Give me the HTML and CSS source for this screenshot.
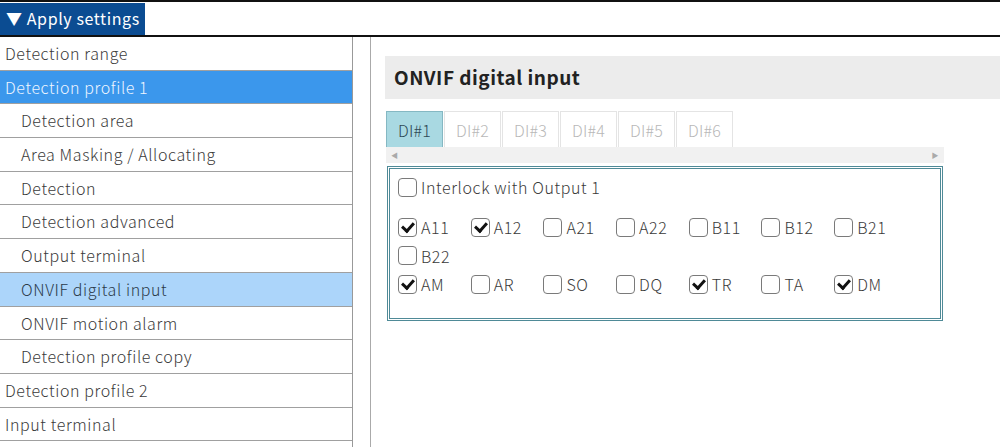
FILE: index.html
```html
<!DOCTYPE html>
<html lang="en">
<head>
    <meta charset="UTF-8">
    <title>ONVIF digital input</title>
    <link rel="stylesheet" href="styles.css">
</head>
<body>
    <div class="topbar">
        <div class="apply">&#9660; Apply settings</div>
    </div>

    <div class="layout">
        <ul class="menu">
            <li>Detection range</li>
            <li class="active">Detection profile 1</li>
            <li class="sub">Detection area</li>
            <li class="sub">Area Masking / Allocating</li>
            <li class="sub">Detection</li>
            <li class="sub">Detection advanced</li>
            <li class="sub">Output terminal</li>
            <li class="sub current">ONVIF digital input</li>
            <li class="sub">ONVIF motion alarm</li>
            <li class="sub">Detection profile copy</li>
            <li>Detection profile 2</li>
            <li>Input terminal</li>
        </ul>

        <div class="content">
            <div class="heading">ONVIF digital input</div>

            <div class="tabs">
                <div class="tab selected">DI#1</div>
                <div class="tab">DI#2</div>
                <div class="tab">DI#3</div>
                <div class="tab">DI#4</div>
                <div class="tab">DI#5</div>
                <div class="tab">DI#6</div>
            </div>
            <div class="scrollbar">
                <span class="arrow">&#9664;</span>
                <span class="arrow">&#9654;</span>
            </div>

            <div class="panel">
                <label class="interlock"><span class="box"></span>Interlock with Output 1</label>

                <div class="options">
                    <label class="opt"><span class="box on"></span>A11</label>
                    <label class="opt"><span class="box on"></span>A12</label>
                    <label class="opt"><span class="box"></span>A21</label>
                    <label class="opt"><span class="box"></span>A22</label>
                    <label class="opt"><span class="box"></span>B11</label>
                    <label class="opt"><span class="box"></span>B12</label>
                    <label class="opt"><span class="box"></span>B21</label>
                    <label class="opt"><span class="box"></span>B22</label>
                </div>
                <div class="options">
                    <label class="opt"><span class="box on"></span>AM</label>
                    <label class="opt"><span class="box"></span>AR</label>
                    <label class="opt"><span class="box"></span>SO</label>
                    <label class="opt"><span class="box"></span>DQ</label>
                    <label class="opt"><span class="box on"></span>TR</label>
                    <label class="opt"><span class="box"></span>TA</label>
                    <label class="opt"><span class="box on"></span>DM</label>
                </div>
            </div>
        </div>
    </div>
</body>
</html>
```

FILE: styles.css
```css
body {
    margin: 0;
    font-family: "Noto Sans CJK JP", "Noto Sans", sans-serif;
    font-size: 16px;
    font-weight: 300;
    letter-spacing: 0.6px;
    color: #3a3a3a;
    background-color: #fff;
    overflow: hidden;
    height: 447px;
}

.topbar {
    border-top: 2px solid #111;
    border-bottom: 2px solid #111;
    height: 32px;
    padding-top: 1px;
}

.apply {
    display: inline-block;
    background-color: #0b4c92;
    color: #fff;
    height: 32px;
    line-height: 31px;
    padding: 0 5px 0 6px;
    font-weight: 400;
}

.layout {
    display: flex;
    gap: 17px;
    height: 411px;
}

.menu {
    list-style: none;
    margin: 0;
    padding: 0;
    width: 352px;
    border-right: 1px solid #999;
}

.menu li {
    height: 32.7px;
    line-height: 32px;
    border-bottom: 1px solid #a0a0a0;
    padding-left: 5px;
    white-space: nowrap;
}

.menu li.sub {
    padding-left: 21px;
}

.menu li.active {
    background-color: #3b97ec;
    color: #eef5ff;
}

.menu li.current {
    background-color: #acd5fa;
    color: #2b3a4a;
}

.content {
    flex: 1;
    border-left: 1px solid #aaa;
    padding: 19px 0 0 14px;
}

.heading {
    background-color: #ececec;
    height: 43px;
    line-height: 42px;
    padding-left: 9px;
    font-size: 19px;
    font-weight: bold;
    letter-spacing: 0.5px;
    color: #222;
}

.tabs {
    display: flex;
    margin-top: 12px;
    margin-left: 1px;
}

.tab {
    width: 55px;
    height: 35px;
    line-height: 36px;
    text-align: center;
    border: 1px solid #e4e4e4;
    border-bottom: none;
    margin-right: 1px;
    color: #b8b8b8;
    letter-spacing: 0.2px;
}

.tab.selected {
    background-color: #a9d9e2;
    border-color: #85b8c3;
    color: #2e4a55;
}

.scrollbar {
    display: flex;
    justify-content: space-between;
    width: 548px;
    height: 16px;
    margin-left: 1px;
    padding: 0 5px;
    background-color: #f1f1f1;
    font-size: 7px;
    line-height: 16px;
    color: #aaa;
}

.panel {
    width: 542px;
    margin: 3px 0 0 2px;
    border: 3px double #4f8a97;
    padding: 5px 0 19px 8px;
}

.interlock {
    display: flex;
    align-items: center;
    height: 26px;
    margin-bottom: 13px;
}

.options {
    display: flex;
    flex-wrap: wrap;
}

.opt {
    display: flex;
    align-items: center;
    width: 72.7px;
    height: 28.5px;
}

.box {
    width: 17px;
    height: 17px;
    border: 1px solid #7a7a7a;
    border-radius: 4px;
    margin-right: 4px;
    position: relative;
    flex-shrink: 0;
}

.box.on::after {
    content: "";
    position: absolute;
    left: 3px;
    top: 3px;
    width: 9px;
    height: 5px;
    border-left: 3px solid #111;
    border-bottom: 3px solid #111;
    transform: rotate(-48deg);
}
```
